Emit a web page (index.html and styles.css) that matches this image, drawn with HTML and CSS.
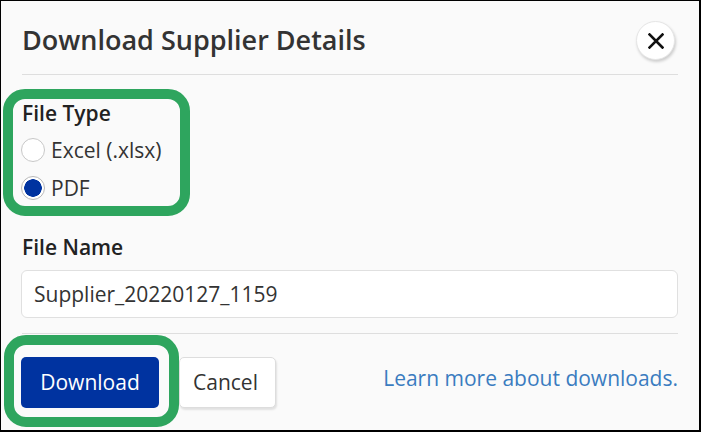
FILE: index.html
```html
<!DOCTYPE html>
<html lang="en">
<head>
  <meta charset="utf-8">
  <title>Download Supplier Details</title>
  <link rel="stylesheet" href="styles.css">
</head>
<body>
  <div class="frame">
    <div class="dialog">
      <div class="dialog-header">
        <h1 class="dialog-title">Download Supplier Details</h1>
        <button class="close-button" aria-label="Close">
          <svg width="16" height="16" viewBox="0 0 16 16">
            <path d="M1.5 1.5 L14.5 14.5 M14.5 1.5 L1.5 14.5" stroke="#111" stroke-width="2.6" stroke-linecap="square"/>
          </svg>
        </button>
      </div>

      <div class="highlight highlight-type">
        <div class="field-label">File Type</div>
        <label class="radio-row">
          <span class="radio"></span>
          <span>Excel (.xlsx)</span>
        </label>
        <label class="radio-row">
          <span class="radio checked"></span>
          <span>PDF</span>
        </label>
      </div>

      <div class="field-label name-label">File Name</div>
      <div class="text-input">Supplier_20220127_1159</div>

      <div class="dialog-footer">
        <div class="highlight highlight-button">
          <button class="btn btn-primary">Download</button>
        </div>
        <button class="btn btn-secondary">Cancel</button>
        <a class="learn-link" href="#">Learn more about downloads.</a>
      </div>
    </div>
  </div>
</body>
</html>
```

FILE: styles.css
```css
html, body {
  margin: 0;
  padding: 0;
  background: #000;
}

.frame {
  box-sizing: border-box;
  width: 701px;
  height: 432px;
  border-style: solid;
  border-color: #000;
  border-width: 1px 2px 2px 1px;
  background: #fafafa;
  overflow: hidden;
  font-family: 'Open Sans', 'Noto Sans', sans-serif;
  color: #333;
}

.dialog {
  padding: 0 21px;
}

.dialog-header {
  display: flex;
  align-items: center;
  justify-content: space-between;
  padding: 20px 0 14px 0;
  border-bottom: 1px solid #dedede;
}

.dialog-title {
  margin: 0;
  padding-bottom: 2px;
  font-size: 27px;
  font-weight: 600;
  line-height: 32px;
  color: #333;
}

.close-button {
  width: 39px;
  height: 39px;
  margin-right: 3px;
  border: 1px solid #e6e6e6;
  border-radius: 50%;
  background: #fff;
  box-shadow: 1px 2px 3px rgba(0, 0, 0, 0.18);
  display: flex;
  align-items: center;
  justify-content: center;
  padding: 0;
}

.highlight {
  position: relative;
}

.highlight::before {
  content: "";
  position: absolute;
  border: 10px solid #2ea55e;
  border-radius: 22px;
  pointer-events: none;
}

.highlight-type {
  width: 160px;
  margin-top: 24px;
}

.highlight-type::before {
  left: -19px;
  top: -10px;
  width: 167px;
  height: 107px;
}

.field-label {
  font-size: 21px;
  font-weight: 600;
  line-height: 28px;
  color: #222;
}

.radio-row {
  display: flex;
  align-items: center;
  gap: 6px;
  margin-top: 9px;
  margin-left: -1px;
  font-size: 21px;
  line-height: 28px;
  color: #333;
}

.radio-row + .radio-row {
  margin-top: 9.5px;
}

.radio {
  box-sizing: border-box;
  width: 24px;
  height: 24px;
  border: 1px solid #c8c8c8;
  border-radius: 50%;
  background: #fff;
}

.radio.checked {
  border-color: #b8b8b8;
  background: radial-gradient(circle, #0033a0 0 8.5px, #fff 9px);
}

.name-label {
  margin-top: 31px;
}

.text-input {
  box-sizing: border-box;
  height: 48px;
  margin-top: 9px;
  margin-left: -1px;
  padding: 0 12px;
  border: 1px solid #e0e0e0;
  border-radius: 6px;
  background: #fff;
  font-size: 21px;
  line-height: 46px;
  color: #333;
}

.dialog-footer {
  display: flex;
  align-items: center;
  margin-top: 15px;
  padding-top: 23px;
  border-top: 1px solid #dedede;
}

.btn {
  box-sizing: border-box;
  height: 51px;
  border-radius: 5px;
  font-family: inherit;
  font-size: 21px;
  line-height: 28px;
  padding: 0;
  cursor: pointer;
}

.btn-primary {
  width: 138px;
  margin-left: -1px;
  border: none;
  background: #0033a0;
  color: #fff;
}

.highlight-button::before {
  left: -18px;
  top: -22px;
  width: 155px;
  height: 72px;
}

.btn-secondary {
  width: 97px;
  margin-left: 20px;
  padding-right: 4px;
  border: 1px solid #dddddd;
  background: #fff;
  color: #333;
  box-shadow: 1px 2px 2px rgba(0, 0, 0, 0.1);
}

.learn-link {
  margin-left: auto;
  margin-bottom: 9px;
  font-size: 21px;
  line-height: 28px;
  color: #3a7cc0;
  text-decoration: none;
}
```
